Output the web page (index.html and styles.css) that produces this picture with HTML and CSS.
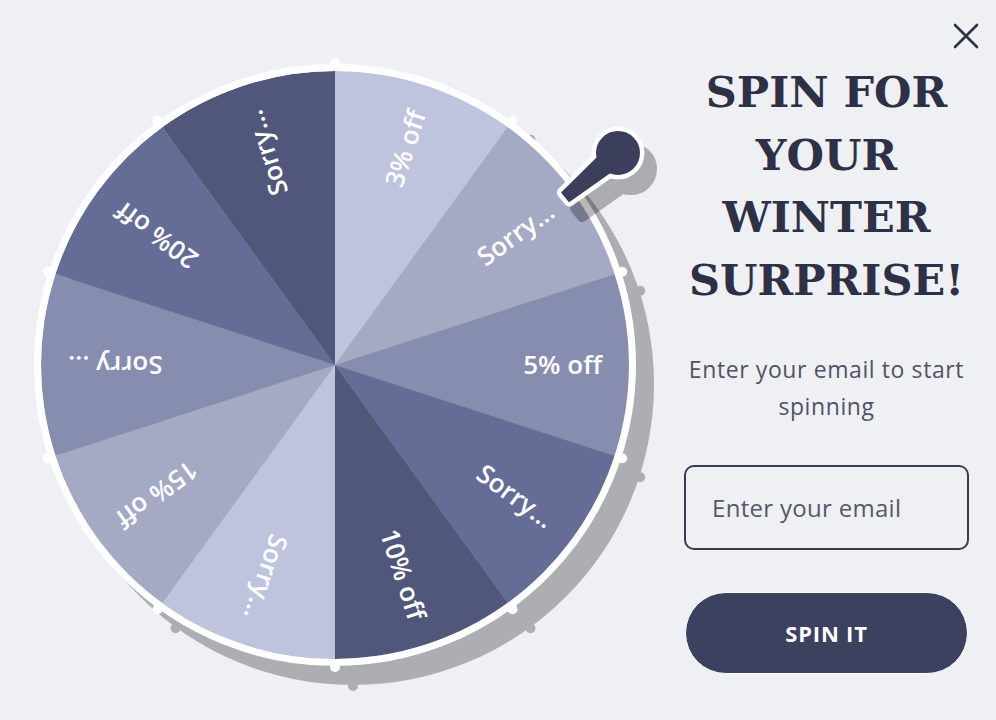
FILE: index.html
```html
<!DOCTYPE html>
<html lang="en">
<head>
<meta charset="utf-8">
<title>Spin for your winter surprise</title>
<link rel="stylesheet" href="styles.css">
</head>
<body>
<div class="popup">
  <svg class="wheel" width="684" height="720" viewBox="0 0 684 720" xmlns="http://www.w3.org/2000/svg">
    <defs>
      <g id="pin">
        <circle cx="618" cy="153" r="21"/>
        <polygon points="625.1,161.4 610.9,144.6 562.3,192.6 569.3,201"/>
      </g>
      <g id="pegs">
        <circle cx="335" cy="63" r="5"/>
        <circle cx="512.5" cy="120.7" r="5"/>
        <circle cx="622.2" cy="271.7" r="5"/>
        <circle cx="622.2" cy="458.3" r="5"/>
        <circle cx="512.5" cy="609.3" r="5"/>
        <circle cx="335" cy="667" r="5"/>
        <circle cx="157.5" cy="609.3" r="5"/>
        <circle cx="47.8" cy="458.3" r="5"/>
        <circle cx="47.8" cy="271.7" r="5"/>
        <circle cx="157.5" cy="120.7" r="5"/>
      </g>
    </defs>
    <g class="shadow" transform="translate(18 19)">
      <circle cx="335" cy="365" r="301"/>
      <use href="#pegs"/>
    </g>
    <g class="wedges">
      <path class="c1" d="M335 365 L335 71 A294 294 0 0 1 507.8 127.2 Z"/>
      <path class="c2" d="M335 365 L507.8 127.2 A294 294 0 0 1 614.6 274.2 Z"/>
      <path class="c3" d="M335 365 L614.6 274.2 A294 294 0 0 1 614.6 455.8 Z"/>
      <path class="c4" d="M335 365 L614.6 455.8 A294 294 0 0 1 507.8 602.8 Z"/>
      <path class="c5" d="M335 365 L507.8 602.8 A294 294 0 0 1 335 659 Z"/>
      <path class="c1" d="M335 365 L335 659 A294 294 0 0 1 162.2 602.8 Z"/>
      <path class="c2" d="M335 365 L162.2 602.8 A294 294 0 0 1 55.4 455.8 Z"/>
      <path class="c3" d="M335 365 L55.4 455.8 A294 294 0 0 1 55.4 274.2 Z"/>
      <path class="c4" d="M335 365 L55.4 274.2 A294 294 0 0 1 162.2 127.2 Z"/>
      <path class="c5" d="M335 365 L162.2 127.2 A294 294 0 0 1 335 71 Z"/>
    </g>
    <circle class="rim" cx="335" cy="365" r="297.5"/>
    <use class="pegs" href="#pegs"/>
    <g class="labels">
      <text x="602" y="365" dy="0.36em" transform="rotate(-72 335 365)">3% off</text>
      <text x="602" y="365" dy="0.36em" transform="rotate(-36 335 365)">Sorry...</text>
      <text x="602" y="365" dy="0.36em">5% off</text>
      <text x="602" y="365" dy="0.36em" transform="rotate(36 335 365)">Sorry...</text>
      <text x="602" y="365" dy="0.36em" transform="rotate(72 335 365)">10% off</text>
      <text x="602" y="365" dy="0.36em" transform="rotate(108 335 365)">Sorry...</text>
      <text x="602" y="365" dy="0.36em" transform="rotate(144 335 365)">15% off</text>
      <text x="602" y="365" dy="0.36em" transform="rotate(180 335 365)">Sorry ...</text>
      <text x="602" y="365" dy="0.36em" transform="rotate(216 335 365)">20% off</text>
      <text x="602" y="365" dy="0.36em" transform="rotate(252 335 365)">Sorry...</text>
    </g>
    <g class="pin-shadow" transform="translate(13 16)">
      <use href="#pin"/>
    </g>
    <use class="pin-outline" href="#pin"/>
    <use class="pin-body" href="#pin"/>
  </svg>

  <section class="panel">
    <h1 class="title">SPIN FOR YOUR WINTER SURPRISE!</h1>
    <p class="subtitle">Enter your email to start spinning</p>
    <input class="email" type="email" placeholder="Enter your email">
    <button class="spin" type="button">SPIN IT</button>
  </section>

  <button class="close" type="button" aria-label="Close">
    <svg width="28" height="28" viewBox="0 0 28 28" xmlns="http://www.w3.org/2000/svg">
      <path d="M3 3 L25 25 M25 3 L3 25" fill="none" stroke="#2f3149" stroke-width="2.6" stroke-linecap="round"/>
    </svg>
  </button>
</div>
</body>
</html>
```
FILE: styles.css
```css
html, body {
  margin: 0;
  padding: 0;
  background: #eff0f4;
}

.popup {
  position: relative;
  width: 996px;
  height: 720px;
  display: flex;
  overflow: hidden;
  background: #eff0f4;
}

.wheel {
  flex: 0 0 684px;
  display: block;
}

.shadow {
  fill: #000;
  opacity: 0.27;
}

.c1 { fill: #bec3de; }
.c2 { fill: #a4a9c4; }
.c3 { fill: #878daf; }
.c4 { fill: #656c96; }
.c5 { fill: #50577a; }

.rim {
  fill: none;
  stroke: #ffffff;
  stroke-width: 7;
}

.pegs {
  fill: #ffffff;
}

.labels text {
  font-family: "Open Sans", "DejaVu Sans", sans-serif;
  font-weight: 600;
  font-size: 26px;
  fill: #ffffff;
  text-anchor: end;
}

.pin-shadow {
  fill: #000;
  stroke: #000;
  stroke-width: 10;
  stroke-linejoin: round;
  opacity: 0.28;
}

.pin-outline {
  fill: #ffffff;
  stroke: #ffffff;
  stroke-width: 11;
  stroke-linejoin: round;
}

.pin-body {
  fill: #3b3f5c;
  stroke: #3b3f5c;
  stroke-width: 2;
  stroke-linejoin: round;
}

.panel {
  flex: 0 0 285px;
  display: flex;
  flex-direction: column;
  align-items: center;
  padding-top: 61px;
}

.title {
  margin: 0;
  width: 100%;
  font-family: "DejaVu Serif", "Liberation Serif", serif;
  font-weight: 700;
  font-size: 43px;
  line-height: 62.5px;
  color: #2e3046;
  text-align: center;
}

.subtitle {
  margin: 40px -8px 0;
  font-family: "Open Sans", "Noto Sans", sans-serif;
  font-weight: 400;
  font-size: 23px;
  line-height: 37px;
  letter-spacing: 0.6px;
  color: #505366;
  text-align: center;
}

.email {
  margin-top: 40px;
  width: 285px;
  height: 85px;
  box-sizing: border-box;
  border: 2px solid #3a3d52;
  border-radius: 10px;
  background: transparent;
  padding: 0 26px;
  font-family: "Open Sans", "Noto Sans", sans-serif;
  font-weight: 400;
  font-size: 24px;
  letter-spacing: 0.3px;
  color: #3a3d52;
  outline: none;
}

.email::placeholder {
  color: #55586a;
}

.spin {
  margin-top: 42px;
  width: 283px;
  height: 82px;
  box-sizing: border-box;
  border: 1.5px solid #ffffff;
  border-radius: 41px;
  background: #3d4160;
  color: #ffffff;
  font-family: "Open Sans", "Noto Sans", sans-serif;
  font-weight: 700;
  font-size: 22px;
  letter-spacing: 0.8px;
  cursor: pointer;
}

.close {
  position: absolute;
  top: 22px;
  right: 16px;
  width: 28px;
  height: 28px;
  padding: 0;
  border: 0;
  background: transparent;
  cursor: pointer;
}

.close svg {
  display: block;
}
```
